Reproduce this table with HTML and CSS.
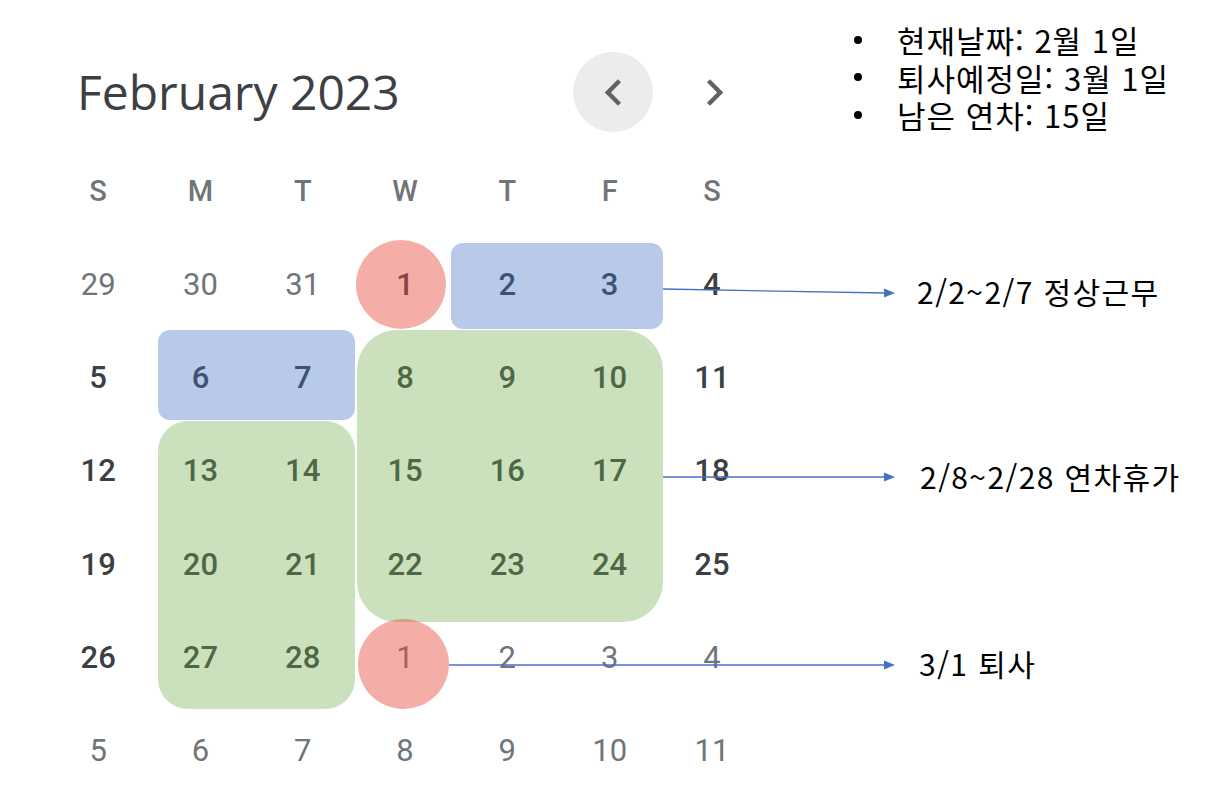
FILE: index.html
```html
<!DOCTYPE html>
<html lang="ko">
<head>
<meta charset="utf-8">
<title>February 2023</title>
<link rel="stylesheet" href="styles.css">
</head>
<body>
<div class="page">
  <header class="head">
    <h1 class="title">February 2023</h1>
    <div class="nav">
      <button class="navbtn prev" aria-label="Previous month">
        <svg viewBox="0 0 24 24" width="53" height="53"><path d="M15.41 7.41L14 6l-6 6 6 6 1.41-1.41L10.83 12z"/></svg>
      </button>
      <button class="navbtn" aria-label="Next month">
        <svg viewBox="0 0 24 24" width="53" height="53"><path d="M8.59 16.59L10 18l6-6-6-6-1.41 1.41L13.17 12z"/></svg>
      </button>
    </div>
    <ul class="facts">
      <li>현재날짜: 2월 1일</li>
      <li>퇴사예정일: 3월 1일</li>
      <li>남은 연차: 15일</li>
    </ul>
  </header>

  <section class="cal">
    <div class="layer days">
      <div class="wd">S</div><div class="wd">M</div><div class="wd">T</div><div class="wd">W</div><div class="wd">T</div><div class="wd">F</div><div class="wd">S</div>

      <div class="d">29</div><div class="d">30</div><div class="d">31</div><div class="d cur">1</div><div class="d cur">2</div><div class="d cur">3</div><div class="d cur">4</div>
      <div class="d cur">5</div><div class="d cur">6</div><div class="d cur">7</div><div class="d cur">8</div><div class="d cur">9</div><div class="d cur">10</div><div class="d cur">11</div>
      <div class="d cur">12</div><div class="d cur">13</div><div class="d cur">14</div><div class="d cur">15</div><div class="d cur">16</div><div class="d cur">17</div><div class="d cur">18</div>
      <div class="d cur">19</div><div class="d cur">20</div><div class="d cur">21</div><div class="d cur">22</div><div class="d cur">23</div><div class="d cur">24</div><div class="d cur">25</div>
      <div class="d cur">26</div><div class="d cur">27</div><div class="d cur">28</div><div class="d">1</div><div class="d">2</div><div class="d">3</div><div class="d">4</div>
      <div class="d">5</div><div class="d">6</div><div class="d">7</div><div class="d">8</div><div class="d">9</div><div class="d">10</div><div class="d">11</div>
    </div>

    <div class="layer marks">
      <div class="hl blue work1"></div>
      <div class="hl blue work2"></div>
      <div class="hl green leave1"></div>
      <div class="hl green leave2"></div>
      <div class="hl red today"></div>
      <div class="hl red lastday"></div>
      <div class="label l1">2/2~2/7 정상근무</div>
      <div class="label l2">2/8~2/28 연차휴가</div>
      <div class="label l3">3/1 퇴사</div>
    </div>
  </section>

  <svg class="arrows" width="1230" height="804" viewBox="0 0 1230 804" aria-hidden="true">
    <line x1="663" y1="289" x2="885" y2="293"/>
    <polygon points="895,293 884,288.5 884,297.5"/>
    <line x1="663" y1="477" x2="885" y2="477"/>
    <polygon points="895,477 884,472.5 884,481.5"/>
    <line x1="449" y1="665" x2="885" y2="665"/>
    <polygon points="895,665 884,660.5 884,669.5"/>
  </svg>
</div>
</body>
</html>
```

FILE: styles.css
```css
* { box-sizing: border-box; }

html, body {
  margin: 0;
  padding: 0;
  background: #ffffff;
}

.page {
  position: relative;
  width: 1230px;
  height: 804px;
  overflow: hidden;
  font-family: Roboto, "Liberation Sans", sans-serif;
}

/* ---------- header ---------- */
.head {
  display: flex;
  align-items: flex-start;
  height: 144.35px;
  padding-left: 77px;
}

.title {
  flex: none;
  width: 496px;
  height: 80px;
  margin: 51px 0 0 0;
  display: flex;
  align-items: center;
  font-family: "Open Sans", "Liberation Sans", sans-serif;
  font-size: 48px;
  font-weight: 500;
  color: #3c4043;
  letter-spacing: 0;
}

.nav {
  flex: none;
  display: flex;
  gap: 21px;
  margin-top: 52px;
}

.navbtn {
  width: 80px;
  height: 80px;
  border: 0;
  padding: 0;
  border-radius: 50%;
  background: transparent;
  display: flex;
  align-items: center;
  justify-content: center;
  fill: #5f6368;
}

.navbtn.prev {
  background: #ececec;
}

.facts {
  list-style: none;
  margin: 21px 0 0 100px;
  padding: 0;
  font-family: "Noto Sans CJK KR", "Noto Sans", sans-serif;
  font-size: 31px;
  line-height: 37.5px;
  letter-spacing: 1px;
  color: #000;
}

.facts li {
  display: flex;
  align-items: center;
  gap: 35px;
  white-space: nowrap;
}

.facts li::before {
  content: "";
  flex: none;
  width: 8px;
  height: 8px;
  border-radius: 50%;
  background: #000;
}

/* ---------- calendar ---------- */
.cal {
  display: grid;
  margin-left: 47px;
}

.layer {
  grid-area: 1 / 1;
  display: grid;
  grid-template-rows: repeat(7, 93.3px);
}

.days {
  grid-template-columns: repeat(7, 102.3px);
}

.marks {
  grid-template-columns: repeat(7, 102.3px) 400px;
}

.wd,
.d {
  display: flex;
  align-items: center;
  justify-content: center;
  color: #70757a;
}

.wd {
  font-size: 29px;
  font-weight: 500;
}

.d {
  font-size: 31px;
  font-weight: 400;
}

.d.cur {
  color: #3c4043;
  font-weight: 500;
}

/* highlight overlays (semi-transparent, above the numbers) */
.blue  { background: rgba(68, 114, 196, 0.38); }
.green { background: rgba(112, 173, 71, 0.36); }
.red   { background: rgba(231, 76, 60, 0.45); border-radius: 50%; }

.work1 {
  grid-row: 2;
  grid-column: 5 / 7;
  margin: 5.6px -2px 1.5px -5px;
  border-radius: 12px;
}

.work2 {
  grid-row: 3;
  grid-column: 2 / 4;
  margin: -0.5px -1px 4px 8.7px;
  border-radius: 12px;
}

.leave1 {
  grid-row: 3 / 6;
  grid-column: 4 / 7;
  margin: -0.5px -2px -11.5px 3px;
  border-radius: 40px;
}

.leave2 {
  grid-row: 4 / 7;
  grid-column: 2 / 4;
  margin: -3px -1px -5px 8.7px;
  border-radius: 30px;
}

.today {
  grid-row: 2;
  grid-column: 4;
  align-self: start;
  justify-self: start;
  width: 90px;
  height: 89px;
  margin: 2.6px 0 0 2px;
}

.lastday {
  grid-row: 6;
  grid-column: 4;
  align-self: start;
  justify-self: start;
  width: 91px;
  height: 90px;
  margin: 8.5px 0 0 4px;
}

.label {
  grid-column: 8;
  align-self: center;
  padding-left: 154px;
  font-family: "Noto Sans CJK KR", "Noto Sans", sans-serif;
  font-size: 30px;
  line-height: 34px;
  letter-spacing: 1.4px;
  color: #000;
  white-space: nowrap;
}

.l1 { grid-row: 2; margin-top: 14px; }
.l2 { grid-row: 4; margin-top: 11px; padding-left: 157px; }
.l3 { grid-row: 6; margin-top: 12px; padding-left: 156px; }

/* ---------- annotation arrows ---------- */
.arrows {
  position: absolute;
  left: 0;
  top: 0;
  pointer-events: none;
}

.arrows line {
  stroke: #4472c4;
  stroke-width: 1.3;
}

.arrows polygon {
  fill: #4472c4;
}
```
